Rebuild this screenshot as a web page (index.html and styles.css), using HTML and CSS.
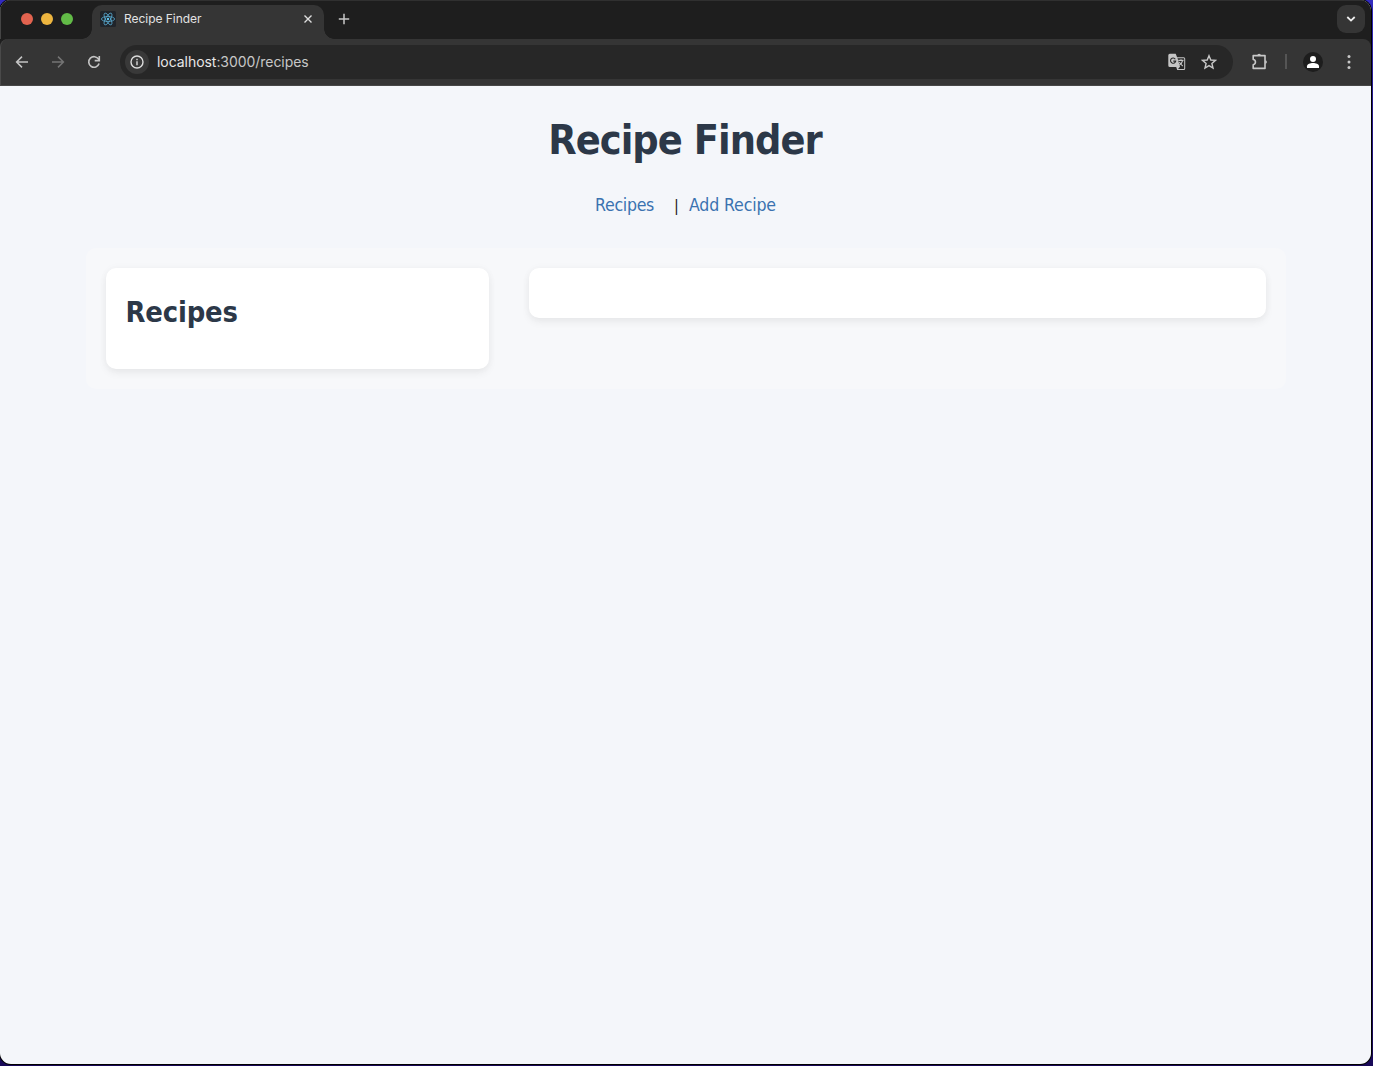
FILE: index.html
```
<!DOCTYPE html>
<html lang="en">
<head>
<meta charset="utf-8">
<title>Recipe Finder</title>
<link rel="stylesheet" href="styles.css">
</head>
<body>
<div class="window">
  <header class="tabstrip">
    <div class="lights"><i class="light red"></i><i class="light yellow"></i><i class="light green"></i></div>
    <div class="tab">
      <svg class="favicon" viewBox="0 0 16 16" fill="none" stroke="#58a9cf" stroke-width=".8">
        <rect width="16" height="16" rx="1.5" fill="#20242a" stroke="none"/>
        <ellipse cx="8" cy="8" rx="6.6" ry="2.5"/>
        <ellipse cx="8" cy="8" rx="6.6" ry="2.5" transform="rotate(60 8 8)"/>
        <ellipse cx="8" cy="8" rx="6.6" ry="2.5" transform="rotate(120 8 8)"/>
        <circle cx="8" cy="8" r="1.2" fill="#61c5ee" stroke="none"/>
      </svg>
      <span class="tab-title">Recipe Finder</span>
      <svg class="close" viewBox="0 0 8 8" fill="none" stroke="#dedede" stroke-width="1.4"><path d="M.5.5l7 7M7.5.5l-7 7"/></svg>
    </div>
    <svg class="plus" viewBox="0 0 12 12" fill="none" stroke="#c8c8c8" stroke-width="1.5"><path d="M6 .8v10.4M.8 6h10.4"/></svg>
    <div class="tab-search"><svg width="10" height="6" viewBox="0 0 10 6" fill="none" stroke="#eee" stroke-width="1.8"><path d="M1.3 1L5 4.6 8.7 1"/></svg></div>
  </header>
  <div class="toolbar">
    <svg class="nav-icon" viewBox="0 0 16 16" fill="none" stroke="#c4c4c4" stroke-width="1.5"><path d="M14 8H3M8 2.6L2.6 8 8 13.4"/></svg>
    <svg class="nav-icon" viewBox="0 0 16 16" fill="none" stroke="#747474" stroke-width="1.5"><path d="M2 8h11M8 2.6L13.4 8 8 13.4"/></svg>
    <svg class="nav-icon" viewBox="0 0 16 16" fill="none" stroke="#c4c4c4" stroke-width="1.6"><path d="M13.1 9.6A5.3 5.3 0 1 1 12.6 5.2L13.3 6.3M13.3 2v4.6H8.7"/></svg>
    <div class="omnibox">
      <span class="info"><svg width="14" height="14" viewBox="0 0 14 14" fill="none" stroke="#dcdcdc" stroke-width="1.4"><circle cx="7" cy="7" r="6"/><path d="M7 6.3v3.9M7 3.7v1.5"/></svg></span>
      <span class="url"><b>localhost</b>:3000/recipes</span>
      <svg class="translate" viewBox="0 0 18 18">
        <path d="M1.8.8h5.9l1.4 3.4h6.6a1.5 1.5 0 0 1 1.5 1.5v9.8a1.5 1.5 0 0 1-1.5 1.5H9.2l-1-3.1H1.8A1.5 1.5 0 0 1 .3 12.4V2.3A1.5 1.5 0 0 1 1.8.8z" fill="#c4c4c4"/>
        <path d="M9.5 5.2h6.200c.3 0 .5.2.5.5v9.700c0 .3-.2.5-.5.5H10l2-2.100z" fill="#272727"/>
        <path d="M7.300 6.200A2.600 2.600 0 1 0 7.700 8.100H5.300" fill="none" stroke="#272727" stroke-width="1.1"/>
        <path d="M10.300 7.400h5.200M13 6.200v1.200M14.600 7.600c-.5 2-1.700 3.500-3.300 4.500M11.300 9c.9 1.700 1.900 2.800 3.500 4" fill="none" stroke="#c4c4c4" stroke-width="1.1"/>
      </svg>
      <svg class="star" viewBox="0 0 16 16" fill="none" stroke="#c8c8c8" stroke-width="1.4"><path d="M8 1.7l1.8 4.3 4.700.4-3.600 3.100 1.100 4.600L8 11.600l-4 2.500 1.100-4.600L1.500 6.400 6.200 6z"/></svg>
    </div>
    <svg class="puzzle" viewBox="0 0 18 18" fill="none" stroke="#c8c8c8" stroke-width="1.6" stroke-linejoin="round"><path d="M2.200 2.600H14V15.400H2.200V11.700C5.200 11.300 5.200 6.900 2.200 6.500z"/><path d="M6.300 2.400a1.800 1.600 0 0 1 3.600 0zM14.200 7.200a1.700 1.800 0 0 1 0 3.600z" fill="#c8c8c8" stroke="none"/></svg>
    <i class="divider"></i>
    <svg class="avatar" viewBox="0 0 20 20"><circle cx="10" cy="10" r="10" fill="#1d1d1d"/><circle cx="10" cy="7" r="3" fill="#fff"/><path d="M4 16v-1.700c0-2.200 3.300-3.300 6-3.300s6 1.100 6 3.300V16z" fill="#fff"/></svg>
    <svg class="menu" viewBox="0 0 4 14" fill="#c8c8c8"><circle cx="2" cy="1.600" r="1.500"/><circle cx="2" cy="7" r="1.500"/><circle cx="2" cy="12.400" r="1.500"/></svg>
  </div>
  <main class="page">
    <h1 class="title">Recipe Finder</h1>
    <nav class="links"><a class="link">Recipes</a><span class="bar">|</span><a class="link add">Add Recipe</a></nav>
    <section class="container">
      <div class="card list"><h2 class="heading">Recipes</h2></div>
      <div class="card detail"></div>
    </section>
  </main>
</div>
</body>
</html>
```
FILE: styles.css
```
* { box-sizing: border-box; }
html { height: 100%; }
body {
  margin: 0; height: 1066px; overflow: hidden;
  padding: 0 2px 2px 0;
  background: linear-gradient(#332cc0 0, #251a92 90px, #1b0b62 260px, #180858 100%);
}
svg { display: block; flex: none; }
.window {
  height: 1064px; display: flex; flex-direction: column; overflow: hidden;
  border-radius: 11px; background: #f4f6fa;
  box-shadow: 0 0 0 1px #000;
  font-family: Inter, "Liberation Sans", sans-serif;
}
.tabstrip {
  position: relative; z-index: 1;
  height: 39px; flex: none; display: flex; align-items: center;
  background: #1e1e1e; padding: 0 6px 1px 0;
  border-left: 1px solid #454545; box-shadow: inset 0 1px #303030;
}
.lights { display: flex; gap: 8px; padding-left: 20px; width: 91px; flex: none; }
.light { width: 12px; height: 12px; border-radius: 50%; }
.red { background: #e2634f; }
.yellow { background: #edb53f; }
.green { background: #62bb47; }
.tab {
  position: relative; align-self: flex-end; width: 232px; height: 34px; margin-bottom: -1px;
  display: flex; align-items: center; padding: 0 12px 6px 8px;
  background: #353535; border-radius: 10px 10px 0 0;
}
.tab::before, .tab::after {
  content: ""; position: absolute; bottom: 0; width: 10px; height: 10px;
}
.tab::before { left: -10px; background: radial-gradient(circle at 0 0, transparent 9.500px, #353535 10px); }
.tab::after { right: -10px; background: radial-gradient(circle at 100% 0, transparent 9.500px, #353535 10px); }
.favicon { width: 16px; height: 16px; }
.tab-title { margin-left: 8px; font-size: 12px; line-height: 16px; color: #e3e3e3; letter-spacing: -.03px; }
.close { width: 8px; height: 8px; margin-left: auto; }
.plus { width: 12px; height: 12px; margin-left: 14px; }
.tab-search {
  margin-left: auto; width: 28px; height: 28px; border-radius: 9px;
  background: #353535; display: flex; align-items: center; justify-content: center;
}
.toolbar {
  position: relative; z-index: 0;
  height: 47px; flex: none; display: flex; align-items: center;
  background: #353535;
  border-left: 1px solid #4a4a4a; border-bottom: 1px solid #474747;
  border-radius: 8px 8px 0 0; box-shadow: 0 -8px #1e1e1e;
  padding: 0 20px 1px 13px;
}
.nav-icon { width: 16px; height: 16px; margin-right: 20px; }
.nav-icon:nth-child(3) { margin-right: 18px; }
.omnibox {
  width: 1113px; height: 34px; border-radius: 17px; background: #272727;
  display: flex; align-items: center; padding: 0 16px 0 5px;
}
.info {
  width: 24px; height: 24px; border-radius: 50%; background: #393939;
  display: flex; align-items: center; justify-content: center;
}
.url { margin-left: 8px; font-size: 14px; line-height: 20px; color: #c7c7c7; letter-spacing: -.05px; }
.url b { font-weight: 400; color: #e8e8e8; }
.translate { width: 18px; height: 18px; margin-left: auto; }
.star { width: 16px; height: 16px; margin-left: 15px; }
.puzzle { width: 18px; height: 18px; margin-left: 18px; }
.divider { width: 2px; height: 15px; background: #555; margin-left: 16px; }
.avatar { width: 20px; height: 20px; margin-left: 16px; }
.menu { width: 4px; height: 14px; margin-left: auto; }
.page {
  flex: 1; text-align: center; color: #222;
  font-family: "DejaVu Sans Condensed", "DejaVu Sans", sans-serif; font-stretch: condensed;
}
.title { margin: 0; padding-top: 30px; font-size: 41px; line-height: 48px; color: #2c3848; letter-spacing: -.950px; text-indent: -1px; }
.links { display: flex; justify-content: center; margin-top: 30px; height: 22px; line-height: 22px; font-size: 17.600px; }
.link { color: #3a72b0; letter-spacing: -.300px; }
.add { letter-spacing: -.150px; }
.bar { font-size: 16px; margin: 1px 10px 0 20px; }
.container {
  width: 1200px; margin: 32px auto 0; padding: 20px; height: 141px;
  display: flex; align-items: flex-start; gap: 40px;
  background: #f7f8fa; border-radius: 10px;
}
.card { background: #fff; border-radius: 10px; box-shadow: 0 4px 8px rgba(0,0,0,.06), 0 0 8px rgba(0,0,0,.03); }
.list { width: 383px; height: 101px; padding: 26px 20px; text-align: left; }
.detail { width: 737px; height: 50px; }
.heading { margin: 0; font-size: 28.800px; line-height: 36px; color: #2c3848; letter-spacing: -.150px; }
```
